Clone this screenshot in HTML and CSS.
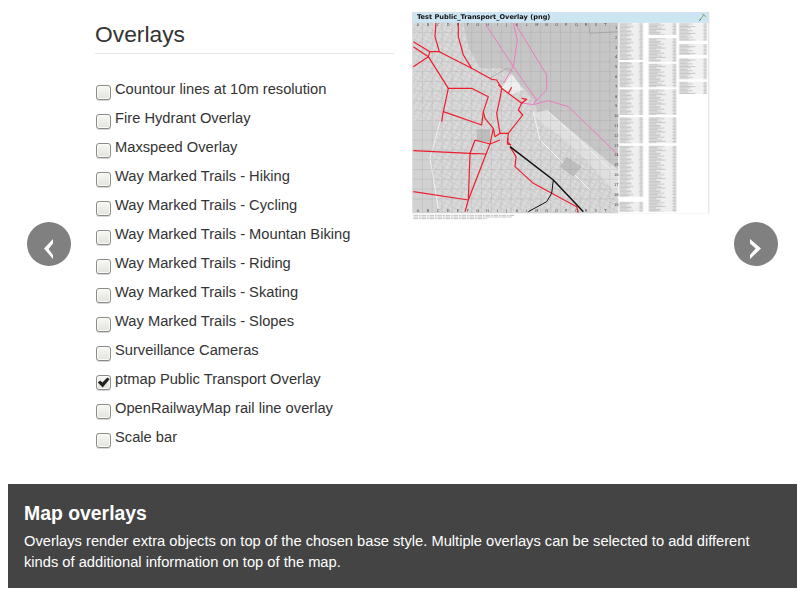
FILE: index.html
```html
<!DOCTYPE html>
<html lang="en">
<head>
<meta charset="utf-8">
<title>Map overlays</title>
<link rel="stylesheet" href="styles.css">
</head>
<body>
<main class="slide">
  <section class="panel">
    <h1 class="title">Overlays</h1>
    <ul class="options">
      <li class="option"><span class="box"></span>Countour lines at 10m resolution</li>
      <li class="option"><span class="box"></span>Fire Hydrant Overlay</li>
      <li class="option"><span class="box"></span>Maxspeed Overlay</li>
      <li class="option"><span class="box"></span>Way Marked Trails - Hiking</li>
      <li class="option"><span class="box"></span>Way Marked Trails - Cycling</li>
      <li class="option"><span class="box"></span>Way Marked Trails - Mountan Biking</li>
      <li class="option"><span class="box"></span>Way Marked Trails - Riding</li>
      <li class="option"><span class="box"></span>Way Marked Trails - Skating</li>
      <li class="option"><span class="box"></span>Way Marked Trails - Slopes</li>
      <li class="option"><span class="box"></span>Surveillance Cameras</li>
      <li class="option"><span class="box"><svg class="tick" viewBox="0 0 15 15"><path d="M1.800 7.400 L4.200 5.400 L6.400 7.600 L11.400 2.400 L13.600 4.200 L6.700 12.400 Z" fill="#222"/></svg></span>ptmap Public Transport Overlay</li>
      <li class="option"><span class="box"></span>OpenRailwayMap rail line overlay</li>
      <li class="option"><span class="box"></span>Scale bar</li>
    </ul>
  </section>
  <svg class="map" viewBox="36 33 894 630" role="img" aria-label="Test Public_Transport_Overlay map preview">
    <defs>
      <pattern id="streets" width="17" height="13" patternUnits="userSpaceOnUse" patternTransform="rotate(28)">
        <rect width="17" height="13" fill="#d4d4d4"/>
        <path d="M0 3H17M0 9.500H17M5 0V13" stroke="#e4e4e4" stroke-width="1.700"/>
        <path d="M0 6.500H17M11 0V13" stroke="#bcbcbc" stroke-width="1.100"/>
      </pattern>
      <pattern id="legend1" x="657" y="70" width="73" height="24" patternUnits="userSpaceOnUse">
        <rect width="73" height="24" fill="#efefef"/>
        <path d="M2 2H38M2 6H26M2 10H44M2 14H32M2 18H22M2 22H36M60 2H71M63 6H71M60 10H71M64 14H71M61 18H71M62 22H71" stroke="#a4a4a4" stroke-width="1.700"/>
      </pattern>
      <pattern id="legend2" x="745" y="70" width="85" height="28" patternUnits="userSpaceOnUse">
        <rect width="85" height="28" fill="#efefef"/>
        <path d="M2 2H34M2 6H48M2 10H28M2 14H40M2 18H52M2 22H24M2 26H38M72 2H83M75 6H83M71 10H83M76 14H83M72 18H83M75 22H83M73 26H83" stroke="#a4a4a4" stroke-width="1.700"/>
      </pattern>
      <pattern id="legend3" x="836" y="70" width="86" height="20" patternUnits="userSpaceOnUse">
        <rect width="86" height="20" fill="#f2f2f2"/>
        <path d="M2 2H42M2 6H30M2 10H50M2 14H36M2 18H26M74 2H84M76 6H84M73 10H84M77 14H84M75 18H84" stroke="#a4a4a4" stroke-width="1.700"/>
      </pattern>
    </defs>
    <rect x="36" y="33" width="894" height="630" fill="#fff"/>
    <rect x="36" y="36" width="892" height="604" fill="#dedede"/>
    <rect x="39" y="68" width="616" height="570" fill="#c6c6c6"/>
    <path d="M39 68H190L205 140L240 205L300 205L335 222L400 300L415 345L480 385L560 460L655 560V638H39Z" fill="url(#streets)"/>
    <path d="M39 365H120L90 475L115 638H39Z" fill="#d2d2d2"/>
    <path d="M120 365L90 475L115 625" fill="none" stroke="#f2f2f2" stroke-width="3"/>
    <path d="M400 340L440 330L655 510V590L560 480L470 400L420 365Z" fill="#e0e0e0"/>
    <path d="M400 335L420 420L570 570M440 330L655 530" fill="none" stroke="#f3f3f3" stroke-width="3"/>
    <path d="M230 388H270V425H230ZM500 470L545 500L520 530L480 500Z" fill="#bdbdbd"/>
    <path d="M305 265L335 222L370 270L330 285Z" fill="#efefef"/>
    <path d="M270 235L320 205L340 215M565 68L570 100L655 95" fill="none" stroke="#969696" stroke-width="1.600"/>
    <path d="M67 68V638M96.600 68V638M126.200 68V638M155.800 68V638M185.400 68V638M215 68V638M244.600 68V638M274.200 68V638M303.800 68V638M333.400 68V638M363 68V638M392.600 68V638M422.200 68V638M451.800 68V638M481.400 68V638M511 68V638M540.600 68V638M570.200 68V638M599.800 68V638M629.400 68V638M39 97H655M39 126.400H655M39 155.800H655M39 185.200H655M39 214.600H655M39 244H655M39 273.400H655M39 302.800H655M39 332.200H655M39 361.600H655M39 391H655M39 420.400H655M39 449.800H655M39 479.200H655M39 508.600H655M39 538H655M39 567.400H655M39 596.800H655" stroke="#8c8c8c" stroke-width="1.100" opacity=".5" fill="none"/>
    <g class="pink">
      <path d="M258 75L340 200L410 300L400 312"/>
      <path d="M340 70L352 120L340 200L310 250"/>
      <path d="M345 70L440 225L440 270L405 305"/>
      <path d="M360 308L400 314L445 302L505 320L655 465"/>
    </g>
    <g class="red">
      <path d="M175 68V110L190 165L215 205L275 238L290 240L305 265L365 310"/>
      <path d="M108 68L105 110L118 155L215 205"/>
      <path d="M118 155H90L85 170L145 265L215 265L265 290L250 335L255 355L280 385L285 410L300 400L290 340L300 295L305 265"/>
      <path d="M40 125L90 155M40 140L85 170M85 170L40 200"/>
      <path d="M145 265L130 335L125 365M130 335L245 375L250 335"/>
      <path d="M280 385L270 432"/>
      <path d="M365 295L380 298L365 310L355 330L368 345L325 400L322 425L332 435L322 432L325 415"/>
      <path d="M40 452L210 460L260 462M225 420L210 460L205 600L40 575M225 420L270 432L255 470L205 600L195 635"/>
      <path d="M325 400L300 400M270 432L300 420"/>
      <path d="M330 440L348 470L345 500L400 550L530 620L535 638"/>
      <path d="M325 280L335 262M295 255L305 262"/>
    </g>
    <g class="rail">
      <path d="M330 440L460 540L550 635"/>
      <path class="thin" d="M460 540L455 580L440 605L385 635"/>
    </g>
    <rect x="655" y="68" width="270" height="572" fill="#fff"/>
    <path d="M657 70H730V180H657ZM657 186H730V262H657ZM657 268H730V345H657ZM657 352H730V430H657ZM657 437H730V590H657ZM657 605H730V635H657Z" fill="url(#legend1)"/>
    <path d="M745 70H830V105H745ZM745 115H830V185H745ZM745 191H830V262H745ZM745 268H830V345H745ZM745 352H830V430H745ZM745 437H830V635H745Z" fill="url(#legend2)"/>
    <path d="M836 70H922V122H836ZM836 132H922V165H836ZM836 175H922V238H836ZM836 245H922V282H836Z" fill="url(#legend3)"/>
    <rect x="39" y="37" width="886" height="31" fill="#cbe5f3"/>
    <text class="map-title" x="51" y="58">Test Public_Transport_Overlay (png)</text>
    <path d="M900 60L912 44M906 42L918 50" fill="none" stroke="#8aa878" stroke-width="3"/>
    <path d="M897 62L903 57" stroke="#444" stroke-width="2"/>
    <text class="grid-label" y="77"><tspan x="50">A</tspan><tspan x="80">B</tspan><tspan x="110">C</tspan><tspan x="140">D</tspan><tspan x="170">E</tspan><tspan x="200">F</tspan><tspan x="229">G</tspan><tspan x="259">H</tspan><tspan x="290">I</tspan><tspan x="318">J</tspan><tspan x="348">K</tspan><tspan x="377">L</tspan><tspan x="406">M</tspan><tspan x="436">N</tspan><tspan x="466">O</tspan><tspan x="495">P</tspan><tspan x="525">Q</tspan><tspan x="554">R</tspan><tspan x="584">S</tspan><tspan x="613">T</tspan></text>
    <text class="grid-label" y="637"><tspan x="50">A</tspan><tspan x="80">B</tspan><tspan x="110">C</tspan><tspan x="140">D</tspan><tspan x="170">E</tspan><tspan x="200">F</tspan><tspan x="229">G</tspan><tspan x="259">H</tspan><tspan x="290">I</tspan><tspan x="318">J</tspan><tspan x="348">K</tspan><tspan x="377">L</tspan><tspan x="406">M</tspan><tspan x="436">N</tspan><tspan x="466">O</tspan><tspan x="495">P</tspan><tspan x="525">Q</tspan><tspan x="554">R</tspan><tspan x="584">S</tspan><tspan x="613">T</tspan></text>
    <text class="grid-label"><tspan x="645" y="87">1</tspan><tspan x="645" y="116">2</tspan><tspan x="645" y="146">3</tspan><tspan x="645" y="175">4</tspan><tspan x="645" y="205">5</tspan><tspan x="645" y="234">6</tspan><tspan x="645" y="263">7</tspan><tspan x="645" y="293">8</tspan><tspan x="645" y="322">9</tspan><tspan x="642" y="352">10</tspan><tspan x="642" y="381">11</tspan><tspan x="642" y="410">12</tspan><tspan x="642" y="440">13</tspan><tspan x="642" y="469">14</tspan><tspan x="642" y="499">15</tspan><tspan x="642" y="528">16</tspan><tspan x="642" y="558">17</tspan><tspan x="642" y="587">18</tspan><tspan x="642" y="617">19</tspan></text>
    <path d="M40 646H345M40 651H335M40 656H260" stroke="#8a8a8a" stroke-width="1.600" stroke-dasharray="14 2 6 2"/>
  </svg>
  <button class="nav nav-prev" type="button" aria-label="Previous">
    <svg viewBox="0 0 44 44"><path d="M17 26.500L26 17V21.500L21.500 27L26 33V37Z" fill="#fff"/></svg>
  </button>
  <button class="nav nav-next" type="button" aria-label="Next">
    <svg viewBox="0 0 44 44"><path d="M27 26.500L16 17V21.500L21.700 26.500L16 33V37Z" fill="#fff"/></svg>
  </button>
</main>
<footer class="caption">
  <h2 class="caption-title">Map overlays</h2>
  <p class="caption-text">Overlays render extra objects on top of the chosen base style. Multiple overlays can be selected to add different kinds of additional information on top of the map.</p>
</footer>
</body>
</html>
```
FILE: styles.css
```css
* {
  box-sizing: border-box;
}

html,
body {
  margin: 0;
  padding: 0;
}

body {
  width: 805px;
  height: 596px;
  overflow: hidden;
  background: #fff;
  font-family: "Liberation Sans", Arial, sans-serif;
  font-size: 14.700px;
  color: #333;
}

.slide {
  position: relative;
  display: flex;
  align-items: flex-start;
  gap: 18px;
  height: 484px;
  padding: 11px 0 0 95px;
}

.panel {
  width: 299px;
  flex: none;
}

.title {
  margin: 0;
  padding: 10px 0 5px;
  height: 43px;
  border-bottom: 1px solid #e5e5e5;
  font-size: 22.800px;
  line-height: 27px;
  font-weight: 400;
  color: #333;
}

.options {
  list-style: none;
  margin: 0;
  padding: 25px 0 0;
}

.option {
  display: flex;
  align-items: flex-start;
  gap: 4px;
  height: 29px;
  line-height: 20px;
  white-space: nowrap;
  padding-left: 1px;
}

.box {
  flex: none;
  width: 15px;
  height: 15px;
  margin-top: 6px;
  border: 1px solid #8a8a86;
  border-radius: 3px;
  background: linear-gradient(#f8f8f5, #e3e2dc);
  box-shadow: inset 0 0 0 1px #fbfbf9, 0 1px 0 #d8d8d8;
  display: flex;
  align-items: center;
  justify-content: center;
}

.tick {
  width: 15px;
  height: 15px;
  flex: none;
}

.map {
  display: block;
  flex: none;
  width: 298px;
  height: 210px;
  filter: blur(0.4px);
}

.pink path {
  fill: none;
  stroke: #f07ac0;
  stroke-width: 3;
}

.red path {
  fill: none;
  stroke: #f01c2c;
  stroke-width: 3.600;
  stroke-linejoin: round;
}

.rail path {
  fill: none;
  stroke: #111;
  stroke-width: 4.500;
}

.rail .thin {
  stroke-width: 3;
}

.map-title {
  font-family: "DejaVu Sans", sans-serif;
  font-weight: 700;
  font-size: 19.800px;
  fill: #111;
}

.grid-label {
  font-family: "DejaVu Sans", sans-serif;
  font-size: 11px;
  fill: #444;
}

.nav {
  position: absolute;
  top: 222px;
  width: 44px;
  height: 44px;
  padding: 0;
  border: 0;
  border-radius: 50%;
  background: #808080;
}

.nav svg {
  display: block;
  width: 44px;
  height: 44px;
}

.nav-prev {
  left: 27px;
}

.nav-next {
  left: 734px;
}

.caption {
  margin: 0 8px;
  height: 104px;
  padding: 17px 16px 0;
  background: #444;
  color: #fff;
}

.caption-title {
  margin: 0 0 6px;
  font-size: 19.400px;
  line-height: 24px;
  font-weight: 700;
}

.caption-text {
  margin: 0;
  font-size: 14.700px;
  line-height: 21px;
}
```
